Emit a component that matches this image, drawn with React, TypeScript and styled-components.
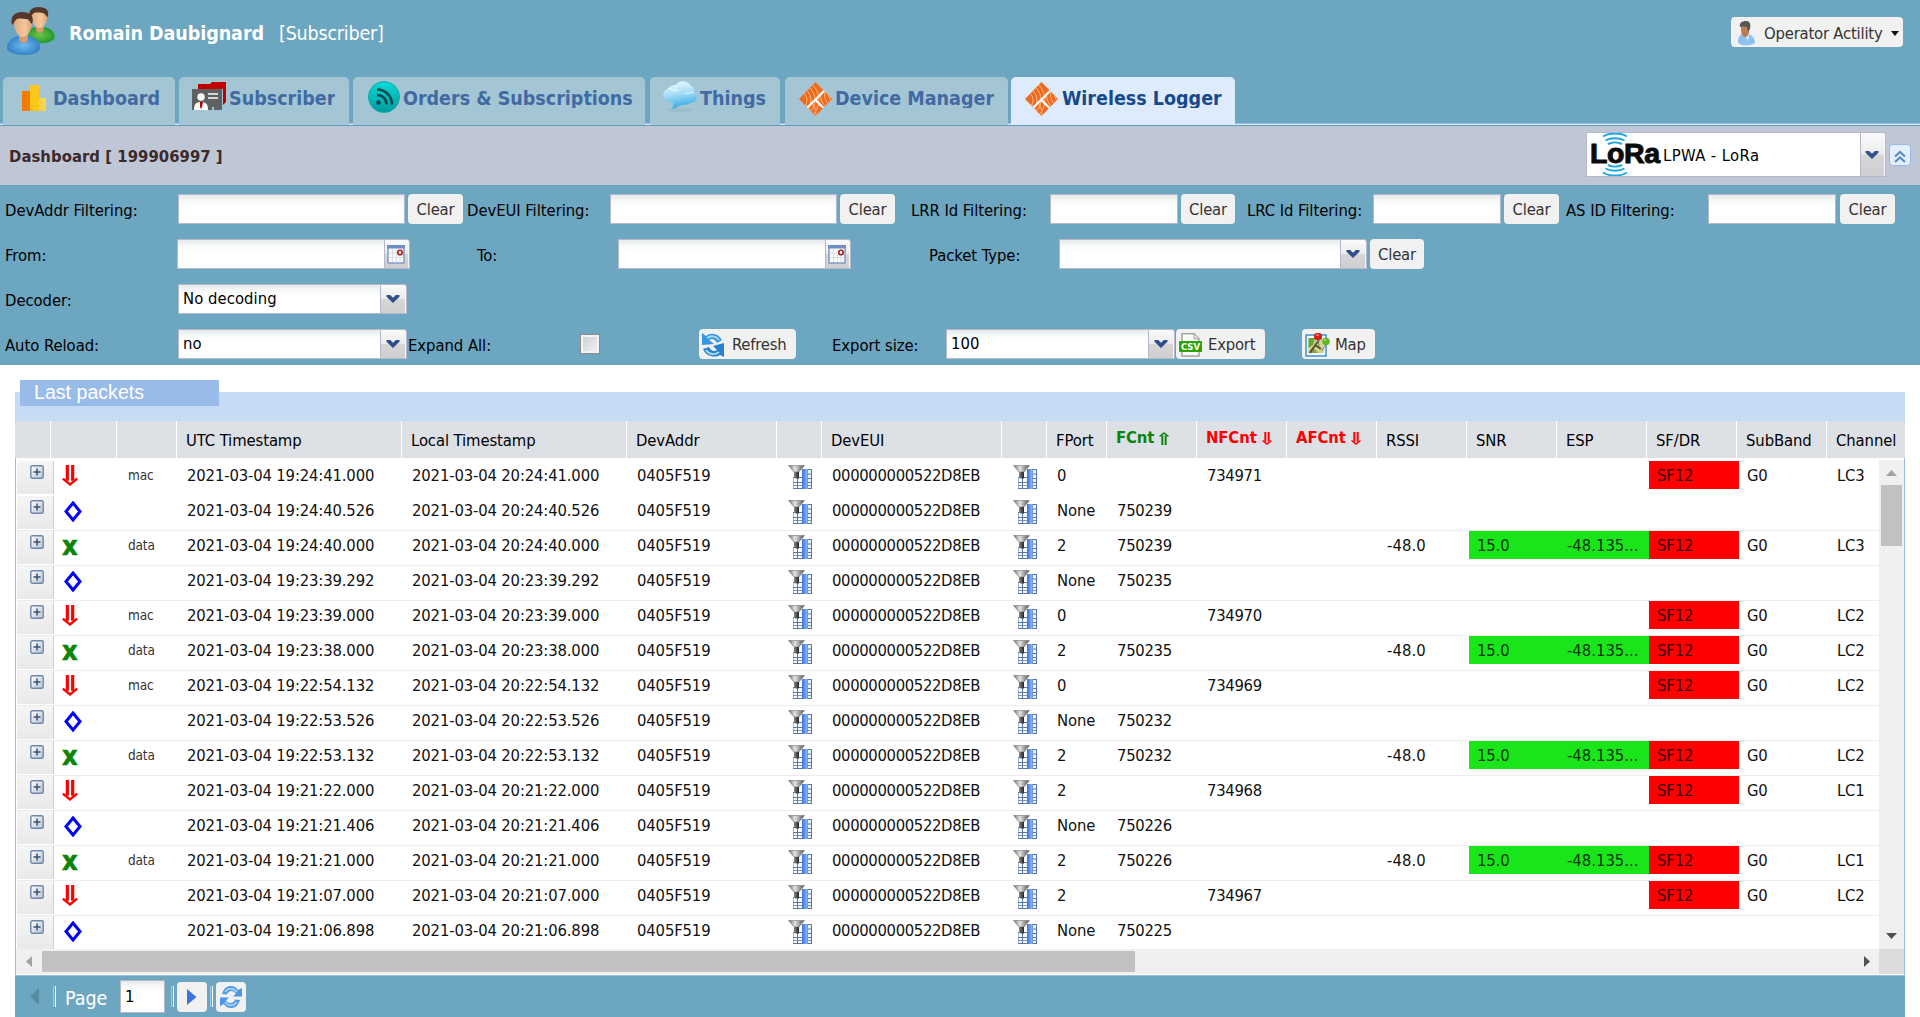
import React from 'react';
import styled, { createGlobalStyle, css } from 'styled-components';

const BLUE = '#6da6c0';
const FONT = '"DejaVu Sans Condensed", "DejaVu Sans", Tahoma, sans-serif';

const GlobalStyle = createGlobalStyle`
  * { box-sizing: border-box; }
  body {
    margin: 0;
    background: #fff;
    font-family: ${FONT};
    font-stretch: condensed;
    font-size: 16.5px;
    letter-spacing: -0.2px;
    color: #000;
    overflow: hidden;
  }
  svg { display: block; flex: none; }
  input, button { font: inherit; letter-spacing: inherit; }
`;

const Page = styled.div`
  width: 1920px;
  height: 1017px;
  display: flex;
  flex-direction: column;
`;

/* ---------- header ---------- */

const Header = styled.header`
  height: 126px;
  background: ${BLUE};
  display: flex;
  flex-direction: column;
  justify-content: space-between;
`;

const UserRow = styled.div`
  display: flex;
  align-items: flex-start;
  padding: 5px 17px 0 6px;
`;

const UserName = styled.div`
  margin: 17px 0 0 13px;
  font-size: 19.5px;
  line-height: 24px;
  color: #fff;
  letter-spacing: -0.05px;
  flex: 1;
  white-space: pre;
`;

const UserRole = styled.span`
  margin-left: 15px;
  letter-spacing: -0.2px;
`;

const Button = styled.button<{ $w?: number; $ml?: number; $gap?: number }>`
  display: flex;
  align-items: center;
  justify-content: ${(p) => (p.$gap ? 'flex-start' : 'center')};
  gap: ${(p) => p.$gap ?? 0}px;
  height: 30px;
  width: ${(p) => (p.$w ? `${p.$w}px` : 'auto')};
  margin: 0 0 0 ${(p) => p.$ml ?? 0}px;
  padding: 1px 0 0 ${(p) => (p.$gap ? 3 : 0)}px;
  border: 0;
  border-radius: 4px;
  background: #f1f1f1;
  color: #333;
  white-space: nowrap;
  flex: none;
`;

const OperatorButton = styled(Button)`
  margin-top: 12px;
  padding: 2px 0 0 5px;
`;

const Tabs = styled.nav`
  display: flex;
  height: 49px;
  padding-left: 3px;
  background: linear-gradient(to bottom, transparent 46px, #99bbe8 46px, #99bbe8 47px, #deebfd 47px, #deebfd 48px, #5b9fba 48px);
`;

const Tab = styled.div<{ $w: number; $gap: number; $pad: number; $active?: boolean }>`
  display: flex;
  width: ${(p) => p.$w}px;
  height: 48px;
  margin-right: ${(p) => p.$gap}px;
  padding: 4px 0 0 ${(p) => p.$pad}px;
  border-radius: 5px 5px 0 0;
  background: ${(p) => (p.$active ? '#deebfd' : '#a4c6d4')};
  color: ${(p) => (p.$active ? '#15498b' : '#416aa3')};
`;

const TabIcon = styled.span<{ $w: number; $top?: number }>`
  width: ${(p) => p.$w}px;
  padding-top: ${(p) => p.$top ?? 0}px;
  flex: none;
`;

const TabText = styled.span`
  font-weight: bold;
  font-size: 19.5px;
  letter-spacing: 0;
  line-height: 22px;
  height: 20px;
  margin-top: 7px;
  overflow: hidden;
  white-space: nowrap;
`;

/* ---------- title bar ---------- */

const TitleBar = styled.div`
  height: 59px;
  background: #bfc7d6;
  display: flex;
  align-items: center;
  padding: 0 9px 2px 9px;
`;

const Title = styled.h1`
  flex: 1;
  margin: 3px 0 0;
  font-size: 16.5px;
  color: #3a2a2c;
  letter-spacing: 0.05px;
`;

const Collapse = styled.button`
  width: 22px;
  height: 22px;
  margin: 1px 0 0 3px;
  padding: 3px 0 0 3px;
  border: 1px solid #99bbe8;
  border-radius: 4px;
  background: #e3effd;
`;

/* ---------- form controls ---------- */

const Field = styled.div<{ $w: number; $h?: number }>`
  display: flex;
  width: ${(p) => p.$w}px;
  height: ${(p) => p.$h ?? 30}px;
  flex: none;
`;

const Box = styled.div`
  flex: 1;
  min-width: 0;
  display: flex;
  align-items: center;
  border: 1px solid #b5b8c8;
  background: linear-gradient(to bottom, #e6e9e9 0, #f6f8f8 5px, #fff 11px);
  padding: 0 0 1px 4px;
  color: #000;
  white-space: nowrap;
  letter-spacing: 0.05px;
`;

const NetBox = styled(Box)`
  background: #fff;
  padding: 0 0 0 4px;
  letter-spacing: 0.4px;
`;

const NetName = styled.span`
  padding-top: 1px;
  margin-left: 1px;
`;

const Trigger = styled.div<{ $w: number }>`
  width: ${(p) => p.$w}px;
  display: flex;
  align-items: center;
  justify-content: center;
  padding-right: 2px;
  border: solid #b5b8c8;
  border-width: 1px 1px 1px 0;
  box-shadow: inset -1px 0 #f7f7f7;
  border-radius: 0 3px 0 0;
  background: linear-gradient(to bottom, #fafafa, #ececec 48%, #d6d6d6 52%, #cfcfcf);
`;

const Filters = styled.section`
  height: 180px;
  background: ${BLUE};
  padding: 9px 0 0 4px;
  display: flex;
  flex-direction: column;
  gap: 15px;
`;

const FilterRow = styled.div`
  display: flex;
  height: 30px;
  align-items: center;
`;

const Label = styled.label<{ $w: number; $ml?: number }>`
  width: ${(p) => p.$w}px;
  margin-left: ${(p) => p.$ml ?? 0}px;
  padding: 2px 0 0 1px;
  letter-spacing: -0.05px;
  flex: none;
  white-space: nowrap;
`;

const Check = styled.span`
  width: 20px;
  height: 20px;
  border: 1px solid #8b8b8b;
  background: linear-gradient(135deg, #c9cdd2, #f5f5f5);
  box-shadow: inset 0 0 0 2px #f3f3f3;
  flex: none;
`;

/* ---------- grid ---------- */

const Panel = styled.section`
  position: relative;
  margin: 27px 15px 0;
  height: 625px;
  display: flex;
  flex-direction: column;
`;

const PanelTitle = styled.h2`
  position: absolute;
  top: -12px;
  left: 5px;
  width: 199px;
  height: 26px;
  margin: 0;
  padding-left: 14px;
  background: #99bbe8;
  color: #fff;
  font: 19.5px/24px "Liberation Sans", Arial, sans-serif;
  letter-spacing: 0.05px;
`;

const PanelBar = styled.div`
  height: 29px;
  background: #c6dcf5;
`;

const columns = css`
  display: grid;
  grid-template-columns: 36px 66px 60px 225px 225px 150px 45px 180px 45px 60px repeat(8, 90px) 78px;
`;

const HeadRow = styled.div`
  ${columns}
  height: 37px;
  background: #dde1e6;
  overflow: hidden;
`;

const HeadCell = styled.div`
  border-right: 1px solid #fff;
  padding: 10px 0 0 9px;
  line-height: 20px;
  letter-spacing: -0.1px;
  white-space: nowrap;
  &:last-child { border-right: 0; }
`;

const CounterHead = styled(HeadCell)<{ $color: string }>`
  display: flex;
  gap: 5px;
  padding: 7px 0 0 9px;
  font-weight: bold;
  color: ${(p) => p.$color};
  svg { margin-top: 4px; }
`;

const Body = styled.div`
  display: grid;
  grid-template-columns: 1fr 25px;
  grid-template-rows: 491px 25px;
  height: 518px;
  border: 1px solid #99bbe8;
  border-top: 0;
  background: #fff;
`;

const Rows = styled.div`
  padding: 3px 0 0 1px;
  overflow: hidden;
`;

const Row = styled.div`
  ${columns}
  height: 35px;
  border-bottom: 1px solid #ededed;
  &:first-child { border-color: #fff; }
`;

const Cell = styled.div<{ $bg?: string; $ls?: number }>`
  height: 28px;
  line-height: 29px;
  padding-left: 8px;
  background: ${(p) => p.$bg ?? 'none'};
  color: ${(p) => (p.$bg ? 'rgba(0,0,0,.8)' : '#111')};
  white-space: nowrap;
  letter-spacing: ${(p) => p.$ls ?? -0.15}px;
`;

const KindCell = styled(Cell)`
  font-size: 13.5px;
  color: #333;
  padding-left: 9px;
`;

const Expander = styled.div`
  width: 37px;
  height: 33px;
  padding: 4px 0 0 13px;
  border-right: 1px solid #d0d0d0;
  background: linear-gradient(to bottom, #f5f5f5, #e9e9e9);
`;

const IconCell = styled.div<{ $x: number; $y: number }>`
  padding: ${(p) => p.$y}px 0 0 ${(p) => p.$x}px;
  height: 34px;
`;

const Cross = styled.span`
  display: block;
  font-weight: bold;
  font-size: 27px;
  line-height: 20px;
  color: #0a850a;
  -webkit-text-stroke: 0.6px #0a850a;
`;

const VScroll = styled.div`
  margin-top: 2px;
  background: #f0f0f0;
  display: flex;
  flex-direction: column;
  align-items: center;
  padding: 10px 0;
`;

const VThumb = styled.div`
  width: 21px;
  height: 61px;
  margin: 9px 0 auto;
  background: #c1c1c1;
`;

const HScroll = styled.div`
  background: #f0f0f0;
  display: flex;
  align-items: center;
  padding: 0 9px 0 10px;
`;

const HThumb = styled.div`
  width: 1093px;
  height: 21px;
  margin: 0 auto 0 10px;
  background: #c1c1c1;
`;

const Corner = styled.div`
  background: #dcdcdc;
`;

const Pager = styled.footer`
  height: 41px;
  background: ${BLUE};
  display: flex;
  align-items: center;
  padding-left: 15px;
`;

const Divider = styled.i<{ $ml: number; $mr: number }>`
  width: 3px;
  height: 21px;
  margin: 0 ${(p) => p.$mr}px 0 ${(p) => p.$ml}px;
  border: solid #98c8ff;
  border-width: 0 0 0 1px;
  box-shadow: inset -1px 0 #fff;
`;

const PagerText = styled.span`
  color: #fff;
  font-size: 19.5px;
  letter-spacing: 0;
  width: 55px;
  padding-top: 4px;
`;

/* ---------- icons ---------- */

const Person = ({ shirt }: { shirt: string }) => (
  <g>
    <path d="M0 36c0-8 7-11 11-12h11c5 1 11 4 11 12 0 4-7 7-16 7S0 40 0 36z" fill={shirt} />
    <path d="M12 22h9v4c0 3-2 5-4 5s-5-2-5-5z" fill="#d69b6c" />
    <path d="M7 10c0-6 4-9 9-9s9 3 9 9-3 15-9 15S7 17 7 10z" fill="url(#skin)" />
    <path d="M5 13C3 5 7 0 15 0s13 4 10 12c-1 0-2-4-5-5-4 0-8-1-10 0-3 2-3 5-5 6z" fill="#54372b" />
  </g>
);

const UsersIcon = () => (
  <svg width="50" height="50" viewBox="0 0 50 50">
    <defs>
      <linearGradient id="skin"><stop stopColor="#e0a87a" /><stop offset=".6" stopColor="#f4c79d" /><stop offset="1" stopColor="#dba06f" /></linearGradient>
      <radialGradient id="green"><stop stopColor="#6ec648" /><stop offset="1" stopColor="#239a2c" /></radialGradient>
      <radialGradient id="blue"><stop stopColor="#70bbf0" /><stop offset="1" stopColor="#3583c8" /></radialGradient>
    </defs>
    <g transform="translate(19 2) scale(.9 .84)"><Person shirt="url(#green)" /></g>
    <g transform="translate(1 7)"><Person shirt="url(#blue)" /></g>
  </svg>
);

const OperatorIcon = () => (
  <svg width="20" height="25" viewBox="0 0 20 25">
    <path d="M2 21c0-5 2-8 6-9 6 0 11 4 11 9 0 4-16 5-17 0z" fill="#8ec3f0" />
    <path d="M8 12l4 8 1-7-3-2z" fill="#e8f4ff" />
    <path d="M5 4h8v6c0 4-2 6-4 6s-4-3-4-7z" fill="#b97d55" />
    <path d="M4 6c-1-4 2-6 6-6s5 3 4 8l-2 3-1-5c-3-1-5-1-7 0z" fill="#565656" />
  </svg>
);

const DashboardIcon = () => (
  <svg width="24" height="26" viewBox="0 0 24 26">
    <path d="M0 6h8v20H0z" fill="#f57c00" />
    <path d="M8 0h9v26H8z" fill="#ffc61c" />
    <path d="M17 13h7v13h-7z" fill="#ffd24d" />
  </svg>
);

const SubscriberIcon = () => (
  <svg width="35" height="30" viewBox="0 0 35 30">
    <path d="M6 2h12l2-2h14v20l-3 3V7H6z" fill="#c00000" />
    <path d="M0 7h30v21h-8v-3h-2v3H0z" fill="#5f6062" />
    <circle cx="9" cy="15" r="3.7" fill="#fff" />
    <path d="M2 28c0-6 2-8 7-8s7 2 7 8z" fill="#fff" />
    <path d="M8 20h3l-1 5-1 2-1-2z" fill="#c00000" />
    <path d="M16 12h10M16 16h10" stroke="#fff" strokeWidth="1.8" opacity=".75" />
  </svg>
);

const OrdersIcon = () => (
  <svg width="32" height="32" viewBox="0 0 32 32">
    <defs><linearGradient id="teal" x2="0" y2="1"><stop stopColor="#08dada" /><stop offset="1" stopColor="#029a9d" /></linearGradient></defs>
    <circle cx="16" cy="16" r="15.5" fill="url(#teal)" stroke="#12a9ac" />
    <circle cx="10.500" cy="21.500" r="2.200" fill="#07464a" />
    <path d="M9 14c5.500 0 9.500 4 9.500 9.500M9 8.500c8.500 0 15 6.500 15 15" fill="none" stroke="#07464a" strokeWidth="2.600" />
  </svg>
);

const CloudIcon = () => (
  <svg width="36" height="32" viewBox="0 0 36 32">
    <defs><linearGradient id="cloud" x2=".2" y2="1"><stop stopColor="#f2fbff" /><stop offset=".5" stopColor="#a9def6" /><stop offset="1" stopColor="#37aee6" /></linearGradient></defs>
    <ellipse cx="17" cy="29" rx="13" ry="2" fill="#7d9aa6" opacity=".2" />
    <path d="M7 20c-8 0-9-10-2-12 1-3 4-4 8-4 3-5 12-5 15 1 3 1 4 4 3 6 5 4 3 11-4 11-3 2-6 2-9 2-3 2-6 3-9 4l2-6c-2 0-3-1-4-2z" fill="url(#cloud)" />
    <path d="M13 4c-1 3 0 5 2 6M31 11c-3 1-6 2-9 1M5 8c3-1 5 0 7 3" stroke="#e4f7ff" strokeWidth="1.300" fill="none" />
  </svg>
);

const ThingParkIcon = ({ id }: { id: string }) => (
  <svg width="33" height="34" viewBox="0 0 33 34">
    <defs><clipPath id={id}><path d="M16.500 0L33 17 16.500 34 0 17z" /></clipPath></defs>
    <g clipPath={`url(#${id})`}>
      <path d="M0 0h33v34H0z" fill="#ee6b1d" />
      <g fill="none" stroke="#ffb684" strokeWidth="1">
        <circle cx="-1" cy="18" r="9" /><circle cx="-1" cy="18" r="13" /><circle cx="-1" cy="18" r="17" /><circle cx="-1" cy="18" r="21" />
        <path d="M7 23c3 2 5 6 5 11M12 20c4 4 5 9 5 14M22 10c-1 5 0 9 4 14M26 10c-1 4 0 8 3 12M30 10c-1 4 0 6 2 9" />
      </g>
      <path d="M7 27L26 8M16 17.500l9 9" stroke="#fff" strokeWidth="2.200" />
    </g>
  </svg>
);

const LoraLogo = () => (
  <svg width="71" height="43" viewBox="0 0 71 43">
    <g fill="none" stroke="#1fa5e0" strokeWidth="2">
      <path d="M12 3.500C18-.5 30-.5 36 3.500M14.500 7.500c5-3 14-3 19 0M17 11c4-2 10-2 14 0M17 32c4 2 10 2 14 0M14.500 35.500c5 3 14 3 19 0M12 39.500c6 4 18 4 24 0" />
    </g>
    <text x="-1" y="29.500" fontFamily="'Liberation Sans', Arial, sans-serif" fontWeight="bold" fontSize="28.500" letterSpacing="0" fill="#0a0a0a" stroke="#0a0a0a" strokeWidth="1" textLength="70">LoRa</text>
  </svg>
);

const Chevron = () => (
  <svg width="14" height="12" viewBox="0 0 14 12">
    <path d="M.5 2h3.700L7 4.800 9.800 2h3.700v1.800L7 10 .5 3.800z" fill="#2f4f8f" />
  </svg>
);

const CalendarIcon = () => (
  <svg width="18" height="19" viewBox="0 0 18 19">
    <rect x="1" y="1" width="16" height="17" fill="#fafafa" stroke="#7f9cc9" strokeWidth="1.500" />
    <path d="M0 0h18v3.500H0z" fill="#6d8fc4" />
    <path d="M5.500 4v13M9.500 4v13M13 4v13M2 8h14M2 12.500h14" stroke="#d9dde4" />
    <circle cx="13" cy="7.500" r="2.200" fill="#fff" stroke="#a51c1c" strokeWidth="1.600" />
  </svg>
);

const RefreshIcon = () => (
  <svg width="23" height="24" viewBox="0 0 23 24">
    <path d="M0 0l4 3c5-4 12-3 16 4l-5 3c-2-4-5-5-8-3l5 4-12 1z" fill="#3795dd" />
    <path d="M22 24l-4-2C13 25 4 24 1 16l6-2c2 4 5 5 8 3l-4-4 11-3z" fill="#2a82cf" />
    <path d="M5 5c4-3 9-2 12 2M4 17c3 5 9 5 13 2" stroke="#a5dbfa" strokeWidth="1.800" fill="none" />
  </svg>
);

const CsvIcon = () => (
  <svg width="23" height="24" viewBox="0 0 23 24">
    <path d="M3 .8h12l5 5V23H3z" fill="#fff" stroke="#a2a2a2" strokeWidth="1.500" />
    <path d="M15 1v5h5" fill="#e5e5e5" stroke="#a2a2a2" />
    <rect y="8" width="23" height="11" rx="1" fill="#2ba309" />
    <text x="2" y="16.800" fontSize="9" fontWeight="bold" letterSpacing="0" textLength="19" lengthAdjust="spacingAndGlyphs" fill="#fff">CSV</text>
  </svg>
);

const MapIcon = () => (
  <svg width="25" height="24" viewBox="0 0 25 24">
    <rect x="1" y="2" width="20" height="21" fill="#f4f8fb" stroke="#4c98ce" strokeWidth="1.600" />
    <path d="M3.500 5h15v15h-15z" fill="#cfd982" />
    <path d="M3.500 5H10l-2 7-4.500 3z" fill="#63a83c" />
    <path d="M3.500 19l4-5 6 6h-10z" fill="#8e9b4f" />
    <path d="M5 20l6-9 3-4M10 12l6 4" stroke="#5f4a35" strokeWidth="1.800" fill="none" />
    <path d="M13 7l1 7M21 11l-4 7" stroke="#777" />
    <rect x="9" y="0" width="8" height="7" rx="3" fill="#d91c1c" />
    <circle cx="21" cy="8.500" r="3.800" fill="#65b52a" />
    <path d="M11 2h3M19 7h2" stroke="#fff" opacity=".7" />
  </svg>
);

const PlusIcon = () => (
  <svg width="14" height="14" viewBox="0 0 14 14">
    <defs><linearGradient id="plus" x2="1" y2="1"><stop stopColor="#fff" /><stop offset="1" stopColor="#b8c4d4" /></linearGradient></defs>
    <rect x=".8" y=".8" width="12.400" height="12.400" rx="1.500" fill="url(#plus)" stroke="#6e88aa" strokeWidth="1.400" />
    <path d="M7 3.500v7M3.500 7h7" stroke="#3b5273" strokeWidth="1.500" />
  </svg>
);

const DoubleArrow = ({ w, h, color, up }: { w: number; h: number; color: string; up?: boolean }) => (
  <svg width={w} height={h} viewBox="0 0 15 20" preserveAspectRatio="none">
    <g transform={up ? 'rotate(180 7.5 10)' : undefined}>
      <path d="M5 0v15M10 0v15" stroke={color} strokeWidth="3" />
      <path d="M.8 13l6.700 5.500 6.700-5.500" fill="none" stroke={color} strokeWidth="2.200" />
    </g>
  </svg>
);

const DiamondIcon = () => (
  <svg width="18" height="21" viewBox="0 0 18 21">
    <path d="M9 2l7 8.500L9 19l-7-8.500z" fill="#fff" stroke="#00f" strokeWidth="3" />
  </svg>
);

const FilterIcon = () => (
  <svg width="24" height="24" viewBox="0 0 24 24">
    <defs>
      <linearGradient id="funnel"><stop stopColor="#666" /><stop offset=".4" stopColor="#e4e4e4" /><stop offset="1" stopColor="#4a4a4a" /></linearGradient>
      <linearGradient id="stem"><stop stopColor="#888" /><stop offset=".5" stopColor="#555" /><stop offset="1" stopColor="#222" /></linearGradient>
      <linearGradient id="col"><stop stopColor="#3a72dc" /><stop offset="1" stopColor="#8fbafa" /></linearGradient>
    </defs>
    <path d="M5 12h9v12H5zM19 4h5v20h-5z" fill="#5a77a6" />
    <path d="M5.500 13h3.500v4H5.500zM10 13h4v4h-4zM5.500 18h3.500v2.300H5.500zM10 18h4v2.300h-4zM5.500 21h3.500v2H5.500zM10 21h4v2h-4z" fill="#f7faff" />
    <path d="M20 5h3v3.500h-3zM20 9.500h3V13h-3zM20 14h3v3h-3zM20 18h3v2.300h-3zM20 21h3v2h-3z" fill="#eaf1ff" />
    <path d="M14 4h5.500v20H14z" fill="url(#col)" />
    <path d="M.5.500h16L11 7H6z" fill="url(#funnel)" stroke="#777" strokeWidth=".6" />
    <path d="M6 7h5v6.500H7.500L6 12z" fill="url(#stem)" />
  </svg>
);

const Arrow = ({ dir, color }: { dir: 'up' | 'down' | 'left' | 'right'; color: string }) => {
  const vertical = dir === 'up' || dir === 'down';
  const d = { up: 'M0 6l5.500-6L11 6z', down: 'M0 0h11L5.500 6z', left: 'M6 0v11L0 5.500z', right: 'M0 0v11l6-5.500z' }[dir];
  return (
    <svg width={vertical ? 11 : 6} height={vertical ? 6 : 11}>
      <path d={d} fill={color} />
    </svg>
  );
};

const SyncIcon = () => (
  <svg width="22" height="22" viewBox="0 0 22 22">
    <path d="M2 8C4 2 7 0 11 0c3 0 5 1 7 4l4-2v8.500h-9l3-3c-3-4-8-3-9 1z" fill="#4c97e8" />
    <path d="M20 14c-2 6-5 8-9 8-3 0-5-1-7-4l-4 2v-8.500h9l-3 3c3 4 8 3 9-1z" fill="#4c97e8" />
    <path d="M5 6c3-4 8-5 12 0M17 16c-3 4-8 5-12 0" fill="none" stroke="#a9d5fb" strokeWidth="1.600" />
  </svg>
);

/* ---------- data ---------- */

type Kind = 'down' | 'diamond' | 'cross';
interface Packet {
  kind: Kind;
  type?: string;
  time: [string, string];
  port: string;
  fcnt?: string;
  nfcnt?: string;
  channel?: string;
}

const packets: Packet[] = [
  { kind: 'down', type: 'mac', time: ['19:24:41.000', '20:24:41.000'], port: '0', nfcnt: '734971', channel: 'LC3' },
  { kind: 'diamond', time: ['19:24:40.526', '20:24:40.526'], port: 'None', fcnt: '750239' },
  { kind: 'cross', type: 'data', time: ['19:24:40.000', '20:24:40.000'], port: '2', fcnt: '750239', channel: 'LC3' },
  { kind: 'diamond', time: ['19:23:39.292', '20:23:39.292'], port: 'None', fcnt: '750235' },
  { kind: 'down', type: 'mac', time: ['19:23:39.000', '20:23:39.000'], port: '0', nfcnt: '734970', channel: 'LC2' },
  { kind: 'cross', type: 'data', time: ['19:23:38.000', '20:23:38.000'], port: '2', fcnt: '750235', channel: 'LC2' },
  { kind: 'down', type: 'mac', time: ['19:22:54.132', '20:22:54.132'], port: '0', nfcnt: '734969', channel: 'LC2' },
  { kind: 'diamond', time: ['19:22:53.526', '20:22:53.526'], port: 'None', fcnt: '750232' },
  { kind: 'cross', type: 'data', time: ['19:22:53.132', '20:22:53.132'], port: '2', fcnt: '750232', channel: 'LC2' },
  { kind: 'down', time: ['19:21:22.000', '20:21:22.000'], port: '2', nfcnt: '734968', channel: 'LC1' },
  { kind: 'diamond', time: ['19:21:21.406', '20:21:21.406'], port: 'None', fcnt: '750226' },
  { kind: 'cross', type: 'data', time: ['19:21:21.000', '20:21:21.000'], port: '2', fcnt: '750226', channel: 'LC1' },
  { kind: 'down', time: ['19:21:07.000', '20:21:07.000'], port: '2', nfcnt: '734967', channel: 'LC2' },
  { kind: 'diamond', time: ['19:21:06.898', '20:21:06.898'], port: 'None', fcnt: '750225' },
];

const RED = '#fe0000';
const GREEN = '#19e51a';

const KindIcon = ({ kind }: { kind: Kind }) => {
  if (kind === 'down') return <IconCell $x={9} $y={4}><DoubleArrow w={16} h={21} color={RED} /></IconCell>;
  if (kind === 'diamond') return <IconCell $x={11} $y={5}><DiamondIcon /></IconCell>;
  return <IconCell $x={9} $y={5}><Cross>x</Cross></IconCell>;
};

const PacketRow = ({ p }: { p: Packet }) => {
  const uplink = p.kind === 'cross';
  const radio = p.kind !== 'diamond';
  return (
    <Row>
      <Expander><PlusIcon /></Expander>
      <KindIcon kind={p.kind} />
      <KindCell>{p.type}</KindCell>
      <Cell>2021-03-04 {p.time[0]}</Cell>
      <Cell>2021-03-04 {p.time[1]}</Cell>
      <Cell>0405F519</Cell>
      <IconCell $x={9} $y={4}><FilterIcon /></IconCell>
      <Cell $ls={-0.35}>000000000522D8EB</Cell>
      <IconCell $x={9} $y={4}><FilterIcon /></IconCell>
      <Cell>{p.port}</Cell>
      <Cell $ls={-0.3}>{p.fcnt}</Cell>
      <Cell $ls={-0.3}>{p.nfcnt}</Cell>
      <Cell />
      <Cell $ls={0.05}>{uplink && '-48.0'}</Cell>
      <Cell $bg={uplink ? GREEN : undefined}>{uplink && '15.0'}</Cell>
      <Cell $bg={uplink ? GREEN : undefined} $ls={0}>{uplink && '-48.135...'}</Cell>
      <Cell $bg={radio ? RED : undefined}>{radio && 'SF12'}</Cell>
      <Cell>{radio && 'G0'}</Cell>
      <Cell>{p.channel}</Cell>
    </Row>
  );
};

const Select = ({ w, value, trigger = 26 }: { w: number; value?: string; trigger?: number }) => (
  <Field $w={w}>
    <Box>{value}</Box>
    <Trigger $w={trigger}><Chevron /></Trigger>
  </Field>
);

const DateField = ({ w }: { w: number }) => (
  <Field $w={w}>
    <Box />
    <Trigger $w={25}><CalendarIcon /></Trigger>
  </Field>
);

const TextField = ({ w }: { w: number }) => <Field $w={w}><Box /></Field>;

export default function App() {
  return (
    <Page>
      <GlobalStyle />
      <Header>
        <UserRow>
          <UsersIcon />
          <UserName><b>Romain Daubignard</b><UserRole>[Subscriber]</UserRole></UserName>
          <OperatorButton $w={172} $gap={8}>
            <OperatorIcon />
            <span>Operator Actility</span>
            <svg width="8" height="5"><path d="M0 0h8L4 5z" fill="#111" /></svg>
          </OperatorButton>
        </UserRow>
        <Tabs>
          <Tab $w={172} $gap={4} $pad={19}><TabIcon $w={31} $top={4}><DashboardIcon /></TabIcon><TabText>Dashboard</TabText></Tab>
          <Tab $w={170} $gap={4} $pad={13}><TabIcon $w={37} $top={1}><SubscriberIcon /></TabIcon><TabText>Subscriber</TabText></Tab>
          <Tab $w={292} $gap={5} $pad={15}><TabIcon $w={35}><OrdersIcon /></TabIcon><TabText>Orders &amp; Subscriptions</TabText></Tab>
          <Tab $w={130} $gap={5} $pad={13}><TabIcon $w={37}><CloudIcon /></TabIcon><TabText>Things</TabText></Tab>
          <Tab $w={223} $gap={3} $pad={14}><TabIcon $w={36} $top={1}><ThingParkIcon id="tp1" /></TabIcon><TabText>Device Manager</TabText></Tab>
          <Tab $w={224} $gap={0} $pad={14} $active><TabIcon $w={37} $top={1}><ThingParkIcon id="tp2" /></TabIcon><TabText>Wireless Logger</TabText></Tab>
        </Tabs>
      </Header>

      <TitleBar>
        <Title>Dashboard [ 199906997 ]</Title>
        <Field $w={300} $h={45}>
          <NetBox><LoraLogo /><NetName>LPWA - LoRa</NetName></NetBox>
          <Trigger $w={25}><Chevron /></Trigger>
        </Field>
        <Collapse>
          <svg width="14" height="14" viewBox="0 0 14 14"><path d="M2 6.500L7 2l5 4.500M2 12l5-4.500L12 12" fill="none" stroke="#5b8cc6" strokeWidth="2.200" /></svg>
        </Collapse>
      </TitleBar>

      <Filters>
        <FilterRow>
          <Label $w={174}>DevAddr Filtering:</Label><TextField w={227} /><Button $w={55} $ml={3}>Clear</Button>
          <Label $w={144} $ml={3}>DevEUI Filtering:</Label><TextField w={227} /><Button $w={55} $ml={3}>Clear</Button>
          <Label $w={140} $ml={15}>LRR Id Filtering:</Label><TextField w={128} /><Button $w={54} $ml={3}>Clear</Button>
          <Label $w={127} $ml={11}>LRC Id Filtering:</Label><TextField w={128} /><Button $w={55} $ml={3}>Clear</Button>
          <Label $w={143} $ml={6}>AS ID Filtering:</Label><TextField w={128} /><Button $w={55} $ml={4}>Clear</Button>
        </FilterRow>
        <FilterRow>
          <Label $w={173}>From:</Label><DateField w={233} />
          <Label $w={142} $ml={66}>To:</Label><DateField w={233} />
          <Label $w={131} $ml={77}>Packet Type:</Label><Select w={308} /><Button $w={54} $ml={3}>Clear</Button>
        </FilterRow>
        <FilterRow>
          <Label $w={174}>Decoder:</Label><Select w={229} value="No decoding" />
        </FilterRow>
        <FilterRow>
          <Label $w={174}>Auto Reload:</Label><Select w={229} value="no" />
          <Label $w={173}>Expand All:</Label><Check />
          <Button $w={97} $ml={99} $gap={7}><RefreshIcon />Refresh</Button>
          <Label $w={115} $ml={35}>Export size:</Label><Select w={229} value="100" />
          <Button $w={89} $ml={1} $gap={6}><CsvIcon />Export</Button>
          <Button $w={73} $ml={37} $gap={5}><MapIcon />Map</Button>
        </FilterRow>
      </Filters>

      <Panel>
        <PanelBar />
        <PanelTitle>Last packets</PanelTitle>
        <HeadRow>
          <HeadCell /><HeadCell /><HeadCell />
          <HeadCell>UTC Timestamp</HeadCell>
          <HeadCell>Local Timestamp</HeadCell>
          <HeadCell>DevAddr</HeadCell>
          <HeadCell />
          <HeadCell>DevEUI</HeadCell>
          <HeadCell />
          <HeadCell>FPort</HeadCell>
          <CounterHead $color="#0a850a">FCnt<DoubleArrow w={10} h={13} color="#0a850a" up /></CounterHead>
          <CounterHead $color={RED}>NFCnt<DoubleArrow w={10} h={13} color={RED} /></CounterHead>
          <CounterHead $color={RED}>AFCnt<DoubleArrow w={10} h={13} color={RED} /></CounterHead>
          <HeadCell>RSSI</HeadCell>
          <HeadCell>SNR</HeadCell>
          <HeadCell>ESP</HeadCell>
          <HeadCell>SF/DR</HeadCell>
          <HeadCell>SubBand</HeadCell>
          <HeadCell>Channel</HeadCell>
        </HeadRow>
        <Body>
          <Rows>{packets.map((p) => <PacketRow key={p.time[0]} p={p} />)}</Rows>
          <VScroll><Arrow dir="up" color="#a3a3a3" /><VThumb /><Arrow dir="down" color="#505050" /></VScroll>
          <HScroll><Arrow dir="left" color="#a3a3a3" /><HThumb /><Arrow dir="right" color="#505050" /></HScroll>
          <Corner />
        </Body>
        <Pager>
          <svg width="9" height="17"><path d="M9 0v17L0 8.500z" fill="#568ba4" /></svg>
          <Divider $ml={14} $mr={9} />
          <PagerText>Page</PagerText>
          <Field $w={45} $h={33}><Box>1</Box></Field>
          <Divider $ml={6} $mr={3} />
          <Button $w={30}><svg width="10" height="18"><path d="M0 1l9.500 8L0 17z" fill="#3f73e0" /></svg></Button>
          <Divider $ml={3} $mr={3} />
          <Button $w={30}><SyncIcon /></Button>
        </Pager>
      </Panel>
    </Page>
  );
}
